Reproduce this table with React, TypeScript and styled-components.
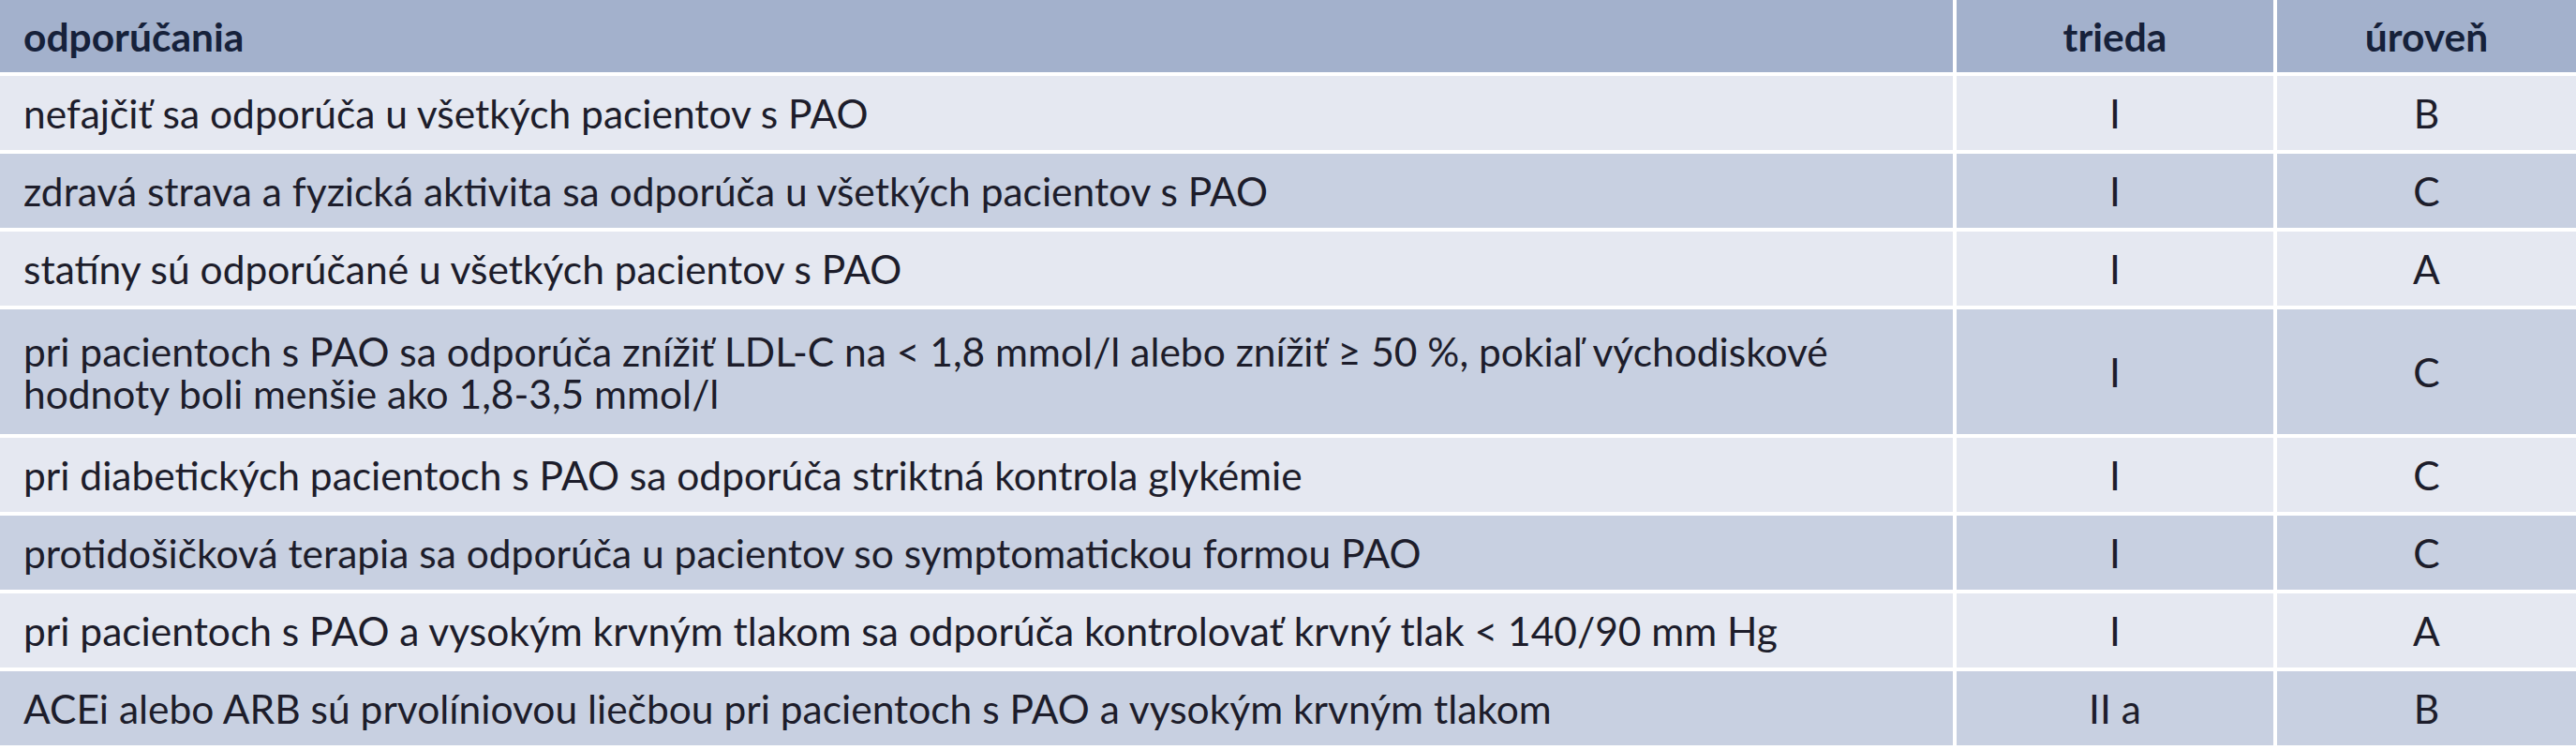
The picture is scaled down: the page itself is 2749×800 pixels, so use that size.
import React from "react";
import styled, { createGlobalStyle } from "styled-components";

const GlobalStyle = createGlobalStyle`
  html, body { margin: 0; padding: 0; background: #ffffff; }
  body { font-family: Lato, "Open Sans", "Liberation Sans", sans-serif; }
`;

const Table = styled.div`
  display: flex;
  flex-direction: column;
  gap: 4px;
  width: 2749px;
`;

const Row = styled.div<{ $h: number }>`
  display: grid;
  grid-template-columns: 2084px 338px 319px;
  column-gap: 4px;
  height: ${(p) => p.$h}px;
`;

const Cell = styled.div<{ $tone: "head" | "light" | "dark"; $center?: boolean }>`
  display: flex;
  align-items: center;
  justify-content: ${(p) => (p.$center ? "center" : "flex-start")};
  padding: ${(p) => (p.$center ? "0" : "0 0 0 25px")};
  background: ${(p) =>
    p.$tone === "head" ? "#a3b1cc" : p.$tone === "light" ? "#e5e8f1" : "#c8d0e1"};
  color: ${(p) => (p.$tone === "head" ? "#16213a" : "#1d1d2b")};
  font-size: 42.5px;
  line-height: 45px;
  font-weight: ${(p) => (p.$tone === "head" ? 700 : 400)};
  white-space: nowrap;
`;

const Lines = styled.div`
  display: flex;
  flex-direction: column;
`;

type Item = { text: React.ReactNode; cls: string; lvl: string; h?: number };

const items: Item[] = [
  { text: "nefajčiť sa odporúča u všetkých pacientov s PAO", cls: "I", lvl: "B" },
  { text: "zdravá strava a fyzická aktivita sa odporúča u všetkých pacientov s PAO", cls: "I", lvl: "C" },
  { text: "statíny sú odporúčané u všetkých pacientov s PAO", cls: "I", lvl: "A" },
  {
    text: (
      <Lines>
        <span>pri pacientoch s PAO sa odporúča znížiť LDL-C na &lt; 1,8 mmol/l alebo znížiť ≥ 50 %, pokiaľ východiskové</span>
        <span>hodnoty boli menšie ako 1,8-3,5 mmol/l</span>
      </Lines>
    ),
    cls: "I",
    lvl: "C",
    h: 133,
  },
  { text: "pri diabetických pacientoch s PAO sa odporúča striktná kontrola glykémie", cls: "I", lvl: "C" },
  { text: "protidošičková terapia sa odporúča u pacientov so symptomatickou formou PAO", cls: "I", lvl: "C" },
  {
    text: "pri pacientoch s PAO a vysokým krvným tlakom sa odporúča kontrolovať krvný tlak < 140/90 mm Hg",
    cls: "I",
    lvl: "A",
  },
  { text: "ACEi alebo ARB sú prvolíniovou liečbou pri pacientoch s PAO a vysokým krvným tlakom", cls: "II a", lvl: "B" },
];

export default function App() {
  return (
    <>
      <GlobalStyle />
      <Table>
        <Row $h={77}>
          <Cell $tone="head">odporúčania</Cell>
          <Cell $tone="head" $center>trieda</Cell>
          <Cell $tone="head" $center>úroveň</Cell>
        </Row>
        {items.map((it, i) => {
          const tone = i % 2 === 0 ? "light" : "dark";
          return (
            <Row key={i} $h={it.h ?? 79}>
              <Cell $tone={tone}>{it.text}</Cell>
              <Cell $tone={tone} $center>{it.cls}</Cell>
              <Cell $tone={tone} $center>{it.lvl}</Cell>
            </Row>
          );
        })}
      </Table>
    </>
  );
}
